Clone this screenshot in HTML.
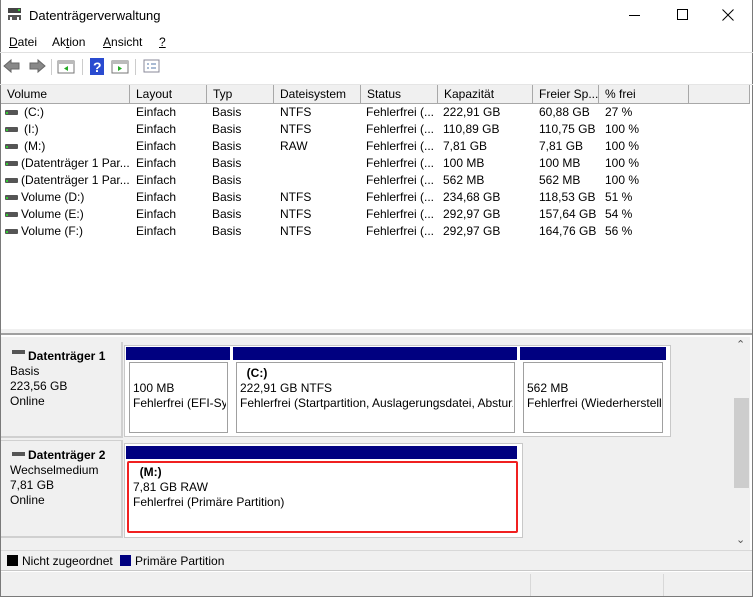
<!DOCTYPE html><html><head><style>
*{margin:0;padding:0;box-sizing:border-box}
body{width:753px;height:597px;background:#fff;font-family:"Liberation Sans",sans-serif;font-size:12px;color:#000;position:relative;overflow:hidden}
.a{position:absolute;white-space:nowrap}
.hd{position:absolute;top:85px;height:19px;border-right:1px solid #a8a8a8;border-bottom:1px solid #a8a8a8;padding-left:6px;line-height:18px;background:#f0f0f0;white-space:nowrap;overflow:hidden}
.row{position:absolute;left:0;height:17px;line-height:17px;width:733px}
.row span{position:absolute;white-space:nowrap}
.drv{position:absolute;left:5px;top:6px;width:13px;height:5px;background:#555;border-radius:1px}
.drv:after{content:"";position:absolute;left:1px;top:2px;width:2px;height:2px;background:#3c3}
.bar{position:absolute;background:#000080;height:13px}
.part{position:absolute;background:#fff;border:1px solid #a0a0a0;outline:2px solid #fff}
.pbox{position:absolute;border:1px solid #a0a0a0;background:#fff}
</style></head><body>
<div class="a" style="left:0;top:0;width:753px;height:597px;border:1px solid #7a7a7a;border-top:none"></div>
<svg class="a" style="left:7px;top:7px" width="16" height="14"><rect x="1" y="1" width="13" height="5" fill="#444"/><rect x="11" y="2" width="2" height="2" fill="#3c3"/><rect x="1" y="8" width="13" height="5" fill="#555"/><rect x="3" y="10" width="2" height="3" fill="#fff"/><rect x="10" y="10" width="2" height="3" fill="#fff"/></svg>
<div class="a" style="left:29px;top:8px;font-size:13px">Datenträgerverwaltung</div>
<div class="a" style="left:629px;top:15px;width:11px;height:1px;background:#000"></div>
<div class="a" style="left:677px;top:9px;width:11px;height:11px;border:1px solid #000"></div>
<svg class="a" style="left:722px;top:9px" width="12" height="12"><path d="M0.5 0.5L11.5 11.5M11.5 0.5L0.5 11.5" stroke="#000"/></svg>
<div class="a" style="left:9px;top:35px"><u>D</u>atei</div>
<div class="a" style="left:52px;top:35px">Ak<u>t</u>ion</div>
<div class="a" style="left:103px;top:35px"><u>A</u>nsicht</div>
<div class="a" style="left:159px;top:35px"><u>?</u></div>
<div class="a" style="left:0;top:52px;width:753px;height:1px;background:#e0e0e0"></div>
<svg class="a" style="left:3px;top:58px" width="160" height="18">
<path d="M1 8L8 2V5H16V11H8V14Z" fill="#888" stroke="#666"/>
<path d="M42 8L35 2V5H27V11H35V14Z" fill="#888" stroke="#666"/>
<rect x="48" y="1" width="1" height="16" fill="#ccc"/>
<rect x="55" y="3" width="16" height="12" fill="#fff" stroke="#777"/><rect x="55" y="3" width="16" height="3" fill="#bbb"/><path d="M65 8V13L61 10.5Z" fill="#2a2"/>
<rect x="79" y="1" width="1" height="16" fill="#ccc"/>
<rect x="87" y="0" width="14" height="17" fill="#2a4bd0"/><text x="90" y="14" fill="#fff" font-size="14" font-weight="bold">?</text>
<rect x="109" y="3" width="16" height="12" fill="#fff" stroke="#777"/><rect x="109" y="3" width="16" height="3" fill="#bbb"/><path d="M115 8V13L119 10.5Z" fill="#2a2"/>
<rect x="132" y="1" width="1" height="16" fill="#ccc"/>
<rect x="141" y="2" width="15" height="12" fill="#fff" stroke="#889"/><path d="M144 6H146M144 10H146M148 6H153M148 10H153" stroke="#57a"/>
</svg>
<div class="a" style="left:0;top:84px;width:753px;height:1px;background:#e5e5e5"></div>
<div class="hd" style="left:1px;width:129px">Volume</div>
<div class="hd" style="left:130px;width:77px">Layout</div>
<div class="hd" style="left:207px;width:67px">Typ</div>
<div class="hd" style="left:274px;width:87px">Dateisystem</div>
<div class="hd" style="left:361px;width:77px">Status</div>
<div class="hd" style="left:438px;width:95px">Kapazität</div>
<div class="hd" style="left:533px;width:66px">Freier Sp...</div>
<div class="hd" style="left:599px;width:90px">% frei</div>
<div class="hd" style="left:689px;width:61px"></div>
<div class="row" style="top:104px"><i class="drv"></i><span style="left:24px">(C:)</span><span style="left:136px">Einfach</span><span style="left:212px">Basis</span><span style="left:280px">NTFS</span><span style="left:366px">Fehlerfrei (...</span><span style="left:443px">222,91 GB</span><span style="left:539px">60,88 GB</span><span style="left:605px">27 %</span></div>
<div class="row" style="top:121px"><i class="drv"></i><span style="left:24px">(I:)</span><span style="left:136px">Einfach</span><span style="left:212px">Basis</span><span style="left:280px">NTFS</span><span style="left:366px">Fehlerfrei (...</span><span style="left:443px">110,89 GB</span><span style="left:539px">110,75 GB</span><span style="left:605px">100 %</span></div>
<div class="row" style="top:138px"><i class="drv"></i><span style="left:24px">(M:)</span><span style="left:136px">Einfach</span><span style="left:212px">Basis</span><span style="left:280px">RAW</span><span style="left:366px">Fehlerfrei (...</span><span style="left:443px">7,81 GB</span><span style="left:539px">7,81 GB</span><span style="left:605px">100 %</span></div>
<div class="row" style="top:155px"><i class="drv"></i><span style="left:21px">(Datenträger 1 Par...</span><span style="left:136px">Einfach</span><span style="left:212px">Basis</span><span style="left:366px">Fehlerfrei (...</span><span style="left:443px">100 MB</span><span style="left:539px">100 MB</span><span style="left:605px">100 %</span></div>
<div class="row" style="top:172px"><i class="drv"></i><span style="left:21px">(Datenträger 1 Par...</span><span style="left:136px">Einfach</span><span style="left:212px">Basis</span><span style="left:366px">Fehlerfrei (...</span><span style="left:443px">562 MB</span><span style="left:539px">562 MB</span><span style="left:605px">100 %</span></div>
<div class="row" style="top:189px"><i class="drv"></i><span style="left:21px">Volume (D:)</span><span style="left:136px">Einfach</span><span style="left:212px">Basis</span><span style="left:280px">NTFS</span><span style="left:366px">Fehlerfrei (...</span><span style="left:443px">234,68 GB</span><span style="left:539px">118,53 GB</span><span style="left:605px">51 %</span></div>
<div class="row" style="top:206px"><i class="drv"></i><span style="left:21px">Volume (E:)</span><span style="left:136px">Einfach</span><span style="left:212px">Basis</span><span style="left:280px">NTFS</span><span style="left:366px">Fehlerfrei (...</span><span style="left:443px">292,97 GB</span><span style="left:539px">157,64 GB</span><span style="left:605px">54 %</span></div>
<div class="row" style="top:223px"><i class="drv"></i><span style="left:21px">Volume (F:)</span><span style="left:136px">Einfach</span><span style="left:212px">Basis</span><span style="left:280px">NTFS</span><span style="left:366px">Fehlerfrei (...</span><span style="left:443px">292,97 GB</span><span style="left:539px">164,76 GB</span><span style="left:605px">56 %</span></div>
<div class="a" style="left:1px;top:329px;width:751px;height:6px;background:#f0f0f0;border-bottom:2px solid #a0a0a0"></div>
<div class="a" style="left:1px;top:337px;width:732px;height:213px;background:#f0f0f0"></div>
<div class="a" style="left:733px;top:337px;width:17px;height:213px;background:#f0f0f0"></div>
<div class="a" style="left:734px;top:398px;width:15px;height:90px;background:#cdcdcd"></div>
<div class="a" style="left:736px;top:338px;font-size:11px;color:#555">&#8963;</div>
<div class="a" style="left:736px;top:533px;font-size:11px;color:#555">&#8964;</div>
<div class="a" style="left:1px;top:342px;width:122px;height:96px;border-right:2px solid #d0d0d0;border-bottom:2px solid #d0d0d0"></div>
<div class="a" style="left:12px;top:350px;width:13px;height:4px;background:#555"></div>
<div class="a" style="left:28px;top:349px;font-weight:bold">Datenträger 1</div>
<div class="a" style="left:10px;top:364px;line-height:15px">Basis<br>223,56 GB<br>Online</div>
<div class="pbox" style="left:124px;top:345px;width:547px;height:92px;border-color:#c8c8c8"></div>
<div class="bar" style="left:126px;top:347px;width:104px"></div>
<div class="bar" style="left:233px;top:347px;width:284px"></div>
<div class="bar" style="left:520px;top:347px;width:146px"></div>
<div class="part" style="left:129px;top:362px;width:99px;height:71px"></div>
<div class="part" style="left:236px;top:362px;width:279px;height:71px"></div>
<div class="part" style="left:523px;top:362px;width:140px;height:71px"></div>
<div class="a" style="left:133px;top:381px;line-height:15px;width:93px;overflow:hidden">100 MB<br>Fehlerfrei (EFI-Sys</div>
<div class="a" style="left:240px;top:366px;line-height:15px;width:273px;overflow:hidden"><b>&nbsp;&nbsp;(C:)</b><br>222,91 GB NTFS<br>Fehlerfrei (Startpartition, Auslagerungsdatei, Absturz</div>
<div class="a" style="left:527px;top:381px;line-height:15px;width:134px;overflow:hidden">562 MB<br>Fehlerfrei (Wiederherstell</div>
<div class="a" style="left:1px;top:440px;width:122px;height:98px;border-right:2px solid #d0d0d0;border-bottom:2px solid #d0d0d0;border-top:1px solid #d0d0d0"></div>
<div class="a" style="left:12px;top:452px;width:13px;height:4px;background:#555"></div>
<div class="a" style="left:28px;top:448px;font-weight:bold">Datenträger 2</div>
<div class="a" style="left:10px;top:463px;line-height:15px">Wechselmedium<br>7,81 GB<br>Online</div>
<div class="pbox" style="left:124px;top:443px;width:399px;height:95px;border-color:#c8c8c8"></div>
<div class="bar" style="left:126px;top:446px;width:391px"></div>
<div class="a" style="left:127px;top:461px;width:391px;height:72px;background:#fff;border:2px solid #f02020;border-radius:2px"></div>
<div class="a" style="left:133px;top:465px;line-height:15px"><b>&nbsp;&nbsp;(M:)</b><br>7,81 GB RAW<br>Fehlerfrei (Primäre Partition)</div>
<div class="a" style="left:1px;top:550px;width:751px;height:21px;background:#f0f0f0;border-top:1px solid #d8d8d8;border-bottom:1px solid #c8c8c8"></div>
<div class="a" style="left:7px;top:555px;width:11px;height:11px;background:#000"></div>
<div class="a" style="left:22px;top:554px">Nicht zugeordnet</div>
<div class="a" style="left:120px;top:555px;width:11px;height:11px;background:#000080"></div>
<div class="a" style="left:135px;top:554px">Primäre Partition</div>
<div class="a" style="left:1px;top:572px;width:751px;height:24px;background:#f0f0f0"></div>
<div class="a" style="left:530px;top:574px;width:1px;height:22px;background:#d8d8d8"></div>
<div class="a" style="left:663px;top:574px;width:1px;height:22px;background:#d8d8d8"></div>
</body></html>
